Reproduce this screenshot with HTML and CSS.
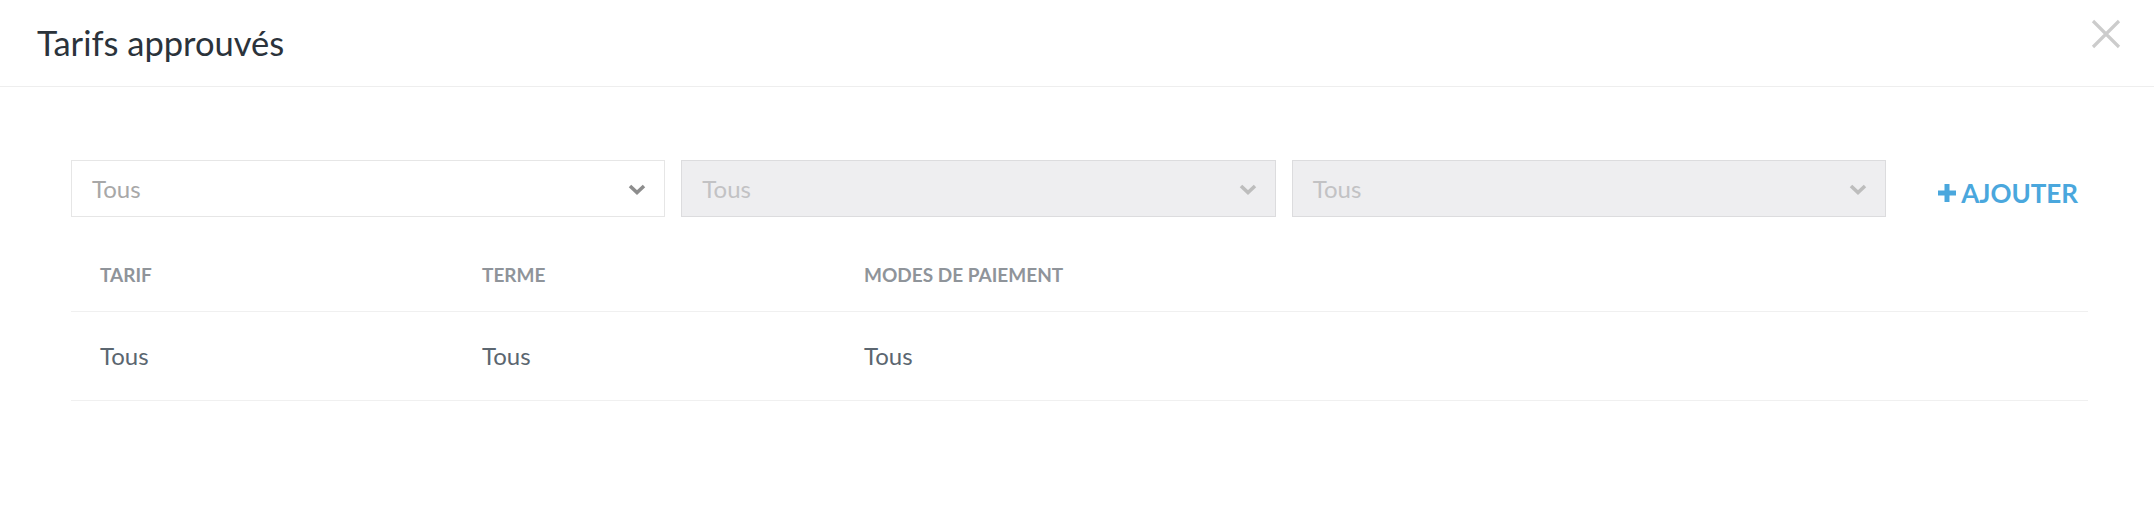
FILE: index.html
```html
<!DOCTYPE html>
<html lang="fr">

<head>
  <meta charset="UTF-8" />
  <meta name="viewport" content="width=device-width, initial-scale=1.0" />
  <title>Tarifs approuvés</title>
  <link rel="stylesheet" href="styles.css">
</head>

<body>
  <div class="modal-header">
    <h1>Tarifs approuvés</h1>
    <span class="close-btn">
      <svg width="30" height="30" viewBox="0 0 30 30">
        <path d="M2 2 L28 28 M28 2 L2 28" stroke="#cccccc" stroke-width="3.2" fill="none" />
      </svg>
    </span>
  </div>

  <div class="modal-body">
    <div class="filters">
      <div class="select">
        <span>Tous</span>
        <svg class="chevron" width="18" height="11" viewBox="0 0 18 11">
          <polyline points="2,2 9,8.5 16,2" stroke="#8d8d8d" stroke-width="3.6" fill="none" />
        </svg>
      </div>
      <div class="select disabled">
        <span>Tous</span>
        <svg class="chevron" width="18" height="11" viewBox="0 0 18 11">
          <polyline points="2,2 9,8.5 16,2" stroke="#bdbdbd" stroke-width="3.6" fill="none" />
        </svg>
      </div>
      <div class="select disabled">
        <span>Tous</span>
        <svg class="chevron" width="18" height="11" viewBox="0 0 18 11">
          <polyline points="2,2 9,8.5 16,2" stroke="#bdbdbd" stroke-width="3.6" fill="none" />
        </svg>
      </div>
      <div class="add-btn">
        <svg width="20" height="20" viewBox="0 0 20 20">
          <path d="M10 1 V19 M1 10 H19" stroke="#4aa7dd" stroke-width="5" fill="none" />
        </svg>
        <span>AJOUTER</span>
      </div>
    </div>

    <table class="tarifs">
      <colgroup>
        <col class="col-fixed">
        <col class="col-fixed">
        <col class="col-fixed">
        <col>
      </colgroup>
      <thead>
        <tr>
          <th>TARIF</th>
          <th>TERME</th>
          <th>MODES DE PAIEMENT</th>
          <th></th>
        </tr>
      </thead>
      <tbody>
        <tr>
          <td>Tous</td>
          <td>Tous</td>
          <td>Tous</td>
          <td></td>
        </tr>
      </tbody>
    </table>
  </div>
</body>

</html>
```

FILE: styles.css
```css
body {
  margin: 0;
  background-color: #FFFFFF;
  font-family: Lato, "Open Sans", sans-serif;
}

/* en-tête */
.modal-header {
  display: flex;
  align-items: center;
  justify-content: space-between;
  height: 86px;
  padding: 0 33px 0 37px;
  border-bottom: 1px solid #eeeeee;
}

.modal-header h1 {
  margin: 0;
  margin-top: -2px;
  font-size: 34.5px;
  font-weight: 400;
  color: #2b333b;
}

.close-btn {
  display: flex;
  margin-top: -18px;
}

/* contenu */
.modal-body {
  padding: 73px 66px 0 71px;
}

.filters {
  display: flex;
  gap: 16px;
  align-items: center;
}

.select {
  flex: 1;
  display: flex;
  align-items: center;
  justify-content: space-between;
  height: 55px;
  padding: 0 18px 0 20px;
  border: 1px solid #e6e6e6;
  background-color: #FFFFFF;
  font-size: 24px;
  color: #a8a8a8;
}

.select.disabled {
  background-color: #eeeef0;
  border-color: #dcdcde;
  color: #c2c2c4;
}

.chevron {
  margin-top: 2px;
}

.add-btn {
  flex: 0 0 186px;
  box-sizing: border-box;
  display: flex;
  align-items: center;
  justify-content: flex-end;
  gap: 4px;
  padding: 8px 10px 0 0;
  font-size: 26px;
  font-weight: 700;
  color: #4aa7dd;
}

.add-btn svg {
  margin-top: 1px;
}

/* tableau */
.tarifs {
  width: 100%;
  border-collapse: collapse;
  table-layout: fixed;
}

.col-fixed {
  width: 382px;
}

.tarifs th {
  height: 94px;
  padding: 22px 0 0 29px;
  text-align: left;
  vertical-align: middle;
  font-size: 19px;
  font-weight: 700;
  color: #8f949a;
  box-sizing: border-box;
}

.tarifs td {
  height: 88px;
  padding: 0 0 0 29px;
  font-size: 24px;
  color: #5b6670;
  border-top: 1px solid #f0f0f0;
  border-bottom: 1px solid #f0f0f0;
}
```
